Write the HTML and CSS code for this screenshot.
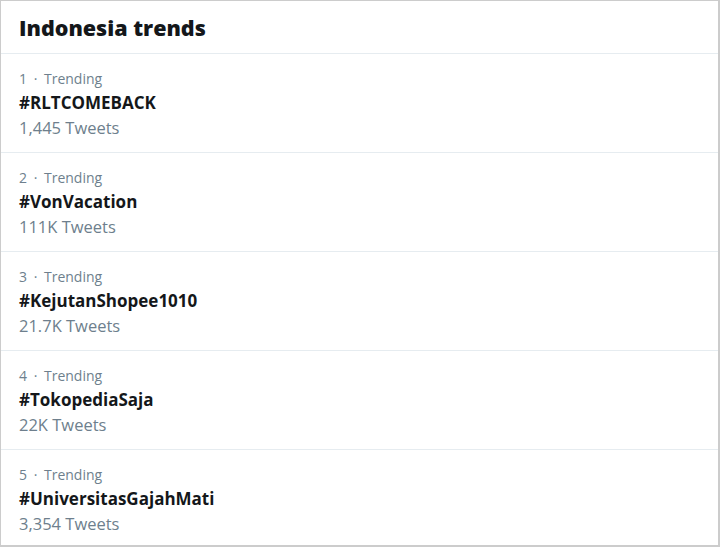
FILE: index.html
```html
<!DOCTYPE html>
<html>
<head>
<meta charset="utf-8">
<link rel="stylesheet" href="styles.css">
</head>
<body>
<div class="panel">
  <div class="header">Indonesia trends</div>
  <div class="trend">
    <div class="meta">1 · Trending</div>
    <div class="tag">#RLTCOMEBACK</div>
    <div class="count">1,445 Tweets</div>
  </div>
  <div class="trend">
    <div class="meta">2 · Trending</div>
    <div class="tag">#VonVacation</div>
    <div class="count">111K Tweets</div>
  </div>
  <div class="trend">
    <div class="meta">3 · Trending</div>
    <div class="tag">#KejutanShopee1010</div>
    <div class="count">21.7K Tweets</div>
  </div>
  <div class="trend">
    <div class="meta">4 · Trending</div>
    <div class="tag">#TokopediaSaja</div>
    <div class="count">22K Tweets</div>
  </div>
  <div class="trend">
    <div class="meta">5 · Trending</div>
    <div class="tag">#UniversitasGajahMati</div>
    <div class="count">3,354 Tweets</div>
  </div>
</div>
</body>
</html>
```
FILE: styles.css
```css
* { box-sizing: border-box; }
html, body { margin: 0; padding: 0; background: #fff; }
body { font-family: "Open Sans", "Liberation Sans", sans-serif; }
.panel {
  width: 720px;
  height: 547px;
  border: 1px solid #cccccc;
  border-bottom-width: 2px;
  border-right-width: 2px;
}
.header {
  height: 53px;
  padding: 0 18px;
  display: flex;
  align-items: center;
  font-size: 21.5px;
  font-weight: 800;
  color: #14171a;
  border-bottom: 1px solid #e6ecf0;
}
.trend {
  height: 99px;
  padding: 12px 18px 0;
  border-bottom: 1px solid #e6ecf0;
}
.meta { color: #6e7f8d; font-size: 14px; line-height: 25px; word-spacing: 3px; }
.count { color: #6e7f8d; font-size: 16.5px; line-height: 25px; }
.tag { color: #14171a; font-size: 17px; font-weight: 700; line-height: 24px; }
```
